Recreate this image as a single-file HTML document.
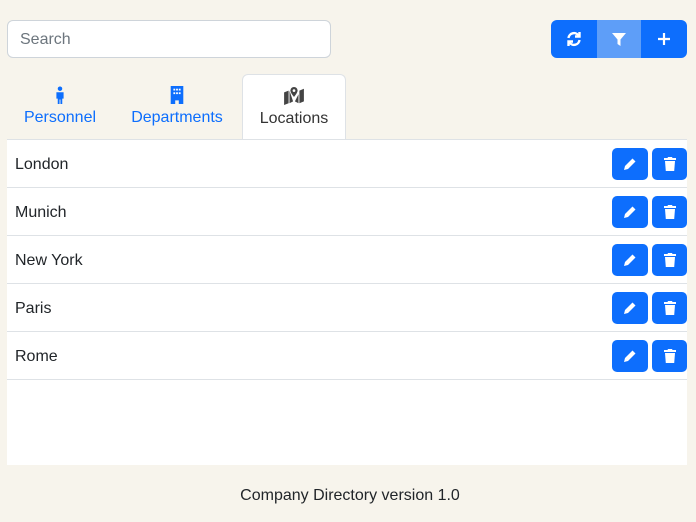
<!DOCTYPE html>
<html><head><style>
body{margin:0;width:696px;height:522px;background:#f7f4ec;font-family:"Liberation Sans",sans-serif;position:relative;overflow:hidden}
.search{position:absolute;left:7px;top:20px;width:324px;height:38px;border:1px solid #ced4da;border-radius:6px;background:#fff;box-sizing:border-box;padding-left:12px;line-height:38px;font-size:16px;color:#6c757d}
.grp{position:absolute;left:551px;top:20px;height:38px;width:136px;border-radius:6px;overflow:hidden;display:flex}
.grp div{height:38px;display:flex;align-items:center;justify-content:center;background:#0d6efd}
.tab{position:absolute;top:74px;height:65px;text-align:center;font-size:16px;color:#0d6efd}
.tab svg{display:block;margin:12px auto 5px}
.act{background:#fff;border:1px solid #dee2e6;border-bottom:none;border-radius:6px 6px 0 0;color:#333;box-sizing:border-box}
.main{position:absolute;left:7px;top:139px;width:680px;height:326px;background:#fff;border-top:1px solid #dee2e6;box-sizing:border-box}
.row{height:48px;border-bottom:1px solid #dee2e6;box-sizing:border-box;position:relative;font-size:16px;color:#212529;line-height:50px;padding-left:8px}
.b{position:absolute;top:8px;width:36px;height:32px;background:#0d6efd;border-radius:5px;display:flex;align-items:center;justify-content:center}
.foot{position:absolute;top:487px;left:2px;width:696px;text-align:center;font-size:16px;color:#212529}
</style></head><body>
<div class="search">Search</div>
<div class="grp">
<div style="width:46px"><svg width="16" height="16" viewBox="0 0 16 16" fill="none" stroke="#fff" stroke-width="2.4"><path d="M2.5 7A5.5 5.5 0 0 1 12.5 4.5"/><path d="M13.5 9A5.5 5.5 0 0 1 3.5 11.5"/><path d="M13.5 1v4.5H9" /><path d="M2.5 15v-4.5H7"/></svg></div>
<div style="width:44px;background:#5e9ef8"><svg width="16" height="16" viewBox="0 0 16 16"><path d="M1 2h14l-5.5 6.5V15l-3-2V8.5z" fill="#fff"/></svg></div>
<div style="width:46px"><svg width="16" height="16" viewBox="0 0 16 16" stroke="#fff" stroke-width="2.2"><path d="M8 2v12M2 8h12"/></svg></div>
</div>
<div class="tab" style="left:15px;width:90px"><svg width="14" height="18" viewBox="0 0 14 20" fill="#0d6efd"><circle cx="7" cy="3" r="2.5"/><path d="M3 7h8v7h-1.5v6h-2v-5h-1v5h-2v-6H3z"/></svg>Personnel</div>
<div class="tab" style="left:122px;width:110px"><svg width="16" height="18" viewBox="0 0 16 20"><path d="M1 0h14v20H10v-4H6v4H1z" fill="#0d6efd"/><g fill="#fff"><rect x="4" y="3" width="2" height="2"/><rect x="7" y="3" width="2" height="2"/><rect x="10" y="3" width="2" height="2"/><rect x="4" y="7" width="2" height="2"/><rect x="7" y="7" width="2" height="2"/><rect x="10" y="7" width="2" height="2"/></g></svg>Departments</div>
<div class="tab act" style="left:242px;width:104px;height:66px"><svg width="24" height="18" viewBox="0 0 24 20" fill="#444"><path d="M1 6l5-2v14l-5 2z"/><path d="M18 4l5-2v14l-5 2z"/><path d="M7 4v14l4-2z M13 16l4 2V8z"/><path d="M12 0a4 4 0 0 1 4 4c0 2.5-4 7-4 7s-4-4.5-4-7a4 4 0 0 1 4-4z"/><circle cx="12" cy="4" r="1.5" fill="#fff"/></svg>Locations</div>
<div class="main">
<div class="row">London</div>
<div class="row">Munich</div>
<div class="row">New York</div>
<div class="row">Paris</div>
<div class="row">Rome</div>
</div>
<div id="btns"></div>
<div class="foot">Company Directory version 1.0</div>
<script>
var h='';for(var i=0;i<5;i++){var t=139+i*48;
h+='<div class="b" style="left:612px;top:'+(t+9)+'px"><svg width="14" height="14" viewBox="0 0 14 14" fill="#fff"><path d="M9.5 1.5l3 3L5 12l-4 1 1-4z"/></svg></div>';
h+='<div class="b" style="left:652px;width:35px;top:'+(t+9)+'px"><svg width="12" height="14" viewBox="0 0 12 14" fill="#fff"><path d="M4 0h4l.5 1H12v2H0V1h3.5z"/><path d="M1 4h10l-.8 10H1.8z"/></svg></div>';}
document.getElementById('btns').innerHTML=h;
</script>
</body></html>
